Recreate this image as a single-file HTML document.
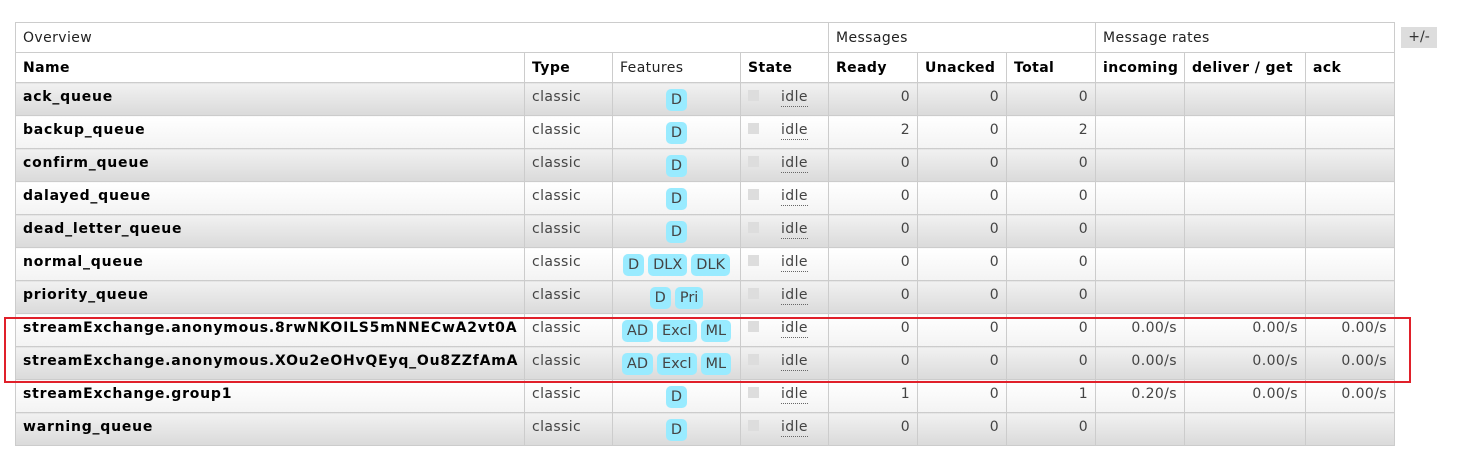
<!DOCTYPE html>
<html><head><meta charset="utf-8"><style>
body{margin:0;width:1459px;height:449px;background:#fff;font-family:"DejaVu Sans","Liberation Sans",sans-serif;font-size:14px;letter-spacing:0.4px;color:#444;position:relative;overflow:hidden}
table{position:absolute;left:15px;top:22px;border-collapse:collapse;table-layout:fixed;width:1380px}
td,th{border:1px solid #ccc;padding:0 7px;text-align:left;vertical-align:top;white-space:nowrap;overflow:hidden}
tr.g1 td{height:27px;line-height:27px;padding-top:2px;font-weight:normal;color:#222}
tr.g2 th{height:27px;line-height:27px;padding-top:2px;color:#000}
tr.g2 th.n{font-weight:normal;color:#222}
tr.r td{height:32px;line-height:28px}
tr.o td{background:linear-gradient(#f1f1f1,#dadada)}
tr.e td{background:linear-gradient(#fff,#f3f3f3)}
td.nm{font-weight:bold;color:#000;letter-spacing:0.78px}
td.num{text-align:right}
td.f{text-align:center;padding:0;letter-spacing:0}
.b{display:inline-block;background:#99ebff;border-radius:5px;padding:0 5px;line-height:22px;color:#444;font-size:14.5px;margin:6px 2px 0}
.cb{display:inline-block;width:11px;height:11px;background:#ddd;vertical-align:top;margin-top:7px}
.idle{margin-left:22px;border-bottom:1px dotted #666;line-height:18px;display:inline-block;margin-top:4px}
#red{position:absolute;left:4px;top:317px;width:1403px;height:62px;border:2px solid #e0202a}
#pm{position:absolute;left:1401px;top:27px;width:36px;height:21px;background:#ddd;text-align:center;line-height:21px;color:#333;font-size:14px;letter-spacing:0}
</style></head><body>
<table>
<colgroup><col style="width:509px"><col style="width:88px"><col style="width:128px"><col style="width:88px"><col style="width:89px"><col style="width:89px"><col style="width:89px"><col style="width:89px"><col style="width:121px"><col style="width:89px"></colgroup>
<tr class="g1"><td colspan="4">Overview</td><td colspan="3">Messages</td><td colspan="3">Message rates</td></tr>
<tr class="g2"><th>Name</th><th>Type</th><th class="n">Features</th><th>State</th><th>Ready</th><th>Unacked</th><th>Total</th><th>incoming</th><th>deliver / get</th><th>ack</th></tr>
<tr class="r o"><td class="nm">ack_queue</td><td>classic</td><td class="f"><span class="b">D</span></td><td><span class="cb"></span><span class="idle">idle</span></td><td class="num">0</td><td class="num">0</td><td class="num">0</td><td></td><td></td><td></td></tr>
<tr class="r e"><td class="nm">backup_queue</td><td>classic</td><td class="f"><span class="b">D</span></td><td><span class="cb"></span><span class="idle">idle</span></td><td class="num">2</td><td class="num">0</td><td class="num">2</td><td></td><td></td><td></td></tr>
<tr class="r o"><td class="nm">confirm_queue</td><td>classic</td><td class="f"><span class="b">D</span></td><td><span class="cb"></span><span class="idle">idle</span></td><td class="num">0</td><td class="num">0</td><td class="num">0</td><td></td><td></td><td></td></tr>
<tr class="r e"><td class="nm">dalayed_queue</td><td>classic</td><td class="f"><span class="b">D</span></td><td><span class="cb"></span><span class="idle">idle</span></td><td class="num">0</td><td class="num">0</td><td class="num">0</td><td></td><td></td><td></td></tr>
<tr class="r o"><td class="nm">dead_letter_queue</td><td>classic</td><td class="f"><span class="b">D</span></td><td><span class="cb"></span><span class="idle">idle</span></td><td class="num">0</td><td class="num">0</td><td class="num">0</td><td></td><td></td><td></td></tr>
<tr class="r e"><td class="nm">normal_queue</td><td>classic</td><td class="f"><span class="b">D</span><span class="b">DLX</span><span class="b">DLK</span></td><td><span class="cb"></span><span class="idle">idle</span></td><td class="num">0</td><td class="num">0</td><td class="num">0</td><td></td><td></td><td></td></tr>
<tr class="r o"><td class="nm">priority_queue</td><td>classic</td><td class="f"><span class="b">D</span><span class="b">Pri</span></td><td><span class="cb"></span><span class="idle">idle</span></td><td class="num">0</td><td class="num">0</td><td class="num">0</td><td></td><td></td><td></td></tr>
<tr class="r e"><td class="nm">streamExchange.anonymous.8rwNKOILS5mNNECwA2vt0A</td><td>classic</td><td class="f"><span class="b">AD</span><span class="b">Excl</span><span class="b">ML</span></td><td><span class="cb"></span><span class="idle">idle</span></td><td class="num">0</td><td class="num">0</td><td class="num">0</td><td class="num">0.00/s</td><td class="num">0.00/s</td><td class="num">0.00/s</td></tr>
<tr class="r o"><td class="nm">streamExchange.anonymous.XOu2eOHvQEyq_Ou8ZZfAmA</td><td>classic</td><td class="f"><span class="b">AD</span><span class="b">Excl</span><span class="b">ML</span></td><td><span class="cb"></span><span class="idle">idle</span></td><td class="num">0</td><td class="num">0</td><td class="num">0</td><td class="num">0.00/s</td><td class="num">0.00/s</td><td class="num">0.00/s</td></tr>
<tr class="r e"><td class="nm">streamExchange.group1</td><td>classic</td><td class="f"><span class="b">D</span></td><td><span class="cb"></span><span class="idle">idle</span></td><td class="num">1</td><td class="num">0</td><td class="num">1</td><td class="num">0.20/s</td><td class="num">0.00/s</td><td class="num">0.00/s</td></tr>
<tr class="r o"><td class="nm">warning_queue</td><td>classic</td><td class="f"><span class="b">D</span></td><td><span class="cb"></span><span class="idle">idle</span></td><td class="num">0</td><td class="num">0</td><td class="num">0</td><td></td><td></td><td></td></tr>
</table>
<div id="red"></div>
<div id="pm">+/-</div>
</body></html>
